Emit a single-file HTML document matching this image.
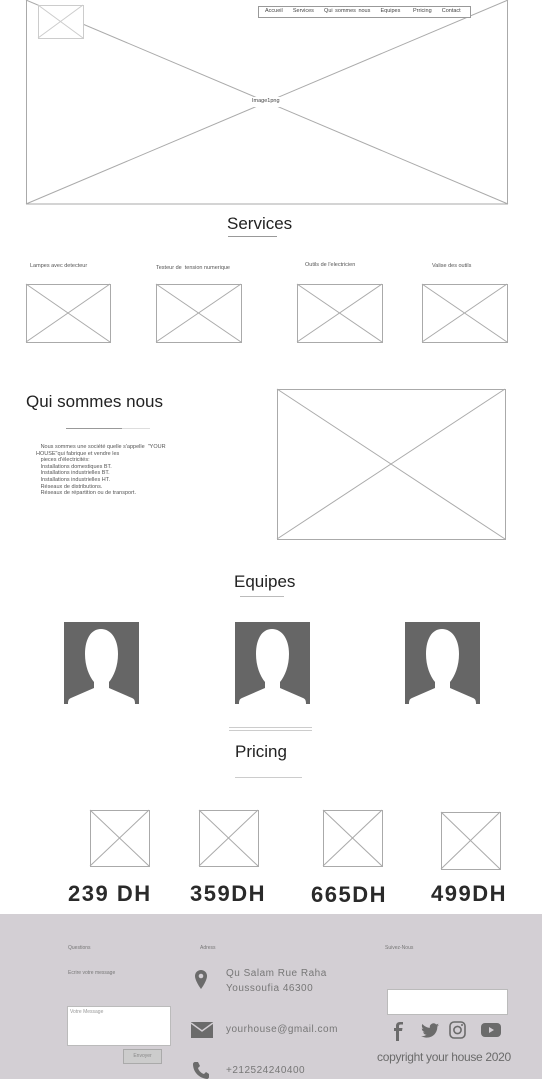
<!DOCTYPE html>
<html><head><meta charset="utf-8"><style>
*{margin:0;padding:0;box-sizing:border-box}
body{width:542px;height:1079px;position:relative;background:#fff;font-family:"Liberation Sans",sans-serif;color:#333;overflow:hidden}
.a{position:absolute;white-space:nowrap}
svg.ph{position:absolute}
.t{font-size:5.5px;color:#555}
.h{font-size:17px;color:#222}
.pr{font-size:22px;font-weight:bold;color:#2a2a2a;letter-spacing:1.5px}
.f{font-size:5px;color:#777}
.ad{font-size:10px;color:#777;letter-spacing:0.5px}
</style></head><body>
<svg class="ph" style="left:0;top:0" width="542" height="914">
<g fill="none" stroke="#aaa" stroke-width="1">
<rect x="26.5" y="-1" width="481" height="205"/>
<line x1="26" y1="0" x2="508" y2="204"/><line x1="508" y1="0" x2="26" y2="204"/>
<rect x="38.5" y="5.5" width="45" height="33" fill="#fff" stroke="#ccc"/>
<line x1="38" y1="5" x2="83" y2="38" stroke="#ccc"/><line x1="83" y1="5" x2="38" y2="38" stroke="#ccc"/>
<rect x="258.5" y="6.5" width="212" height="11" fill="#fff" stroke="#999"/>
<rect x="250" y="97" width="34" height="10" fill="#fff" stroke="none"/>
<line x1="228" y1="236.5" x2="277" y2="236.5" stroke="#999"/>
<rect x="26.5" y="284.5" width="84" height="58"/><line x1="26" y1="284" x2="110" y2="342"/><line x1="110" y1="284" x2="26" y2="342"/>
<rect x="156.5" y="284.5" width="85" height="58"/><line x1="156" y1="284" x2="241" y2="342"/><line x1="241" y1="284" x2="156" y2="342"/>
<rect x="297.5" y="284.5" width="85" height="58"/><line x1="297" y1="284" x2="382" y2="342"/><line x1="382" y1="284" x2="297" y2="342"/>
<rect x="422.5" y="284.5" width="85" height="58"/><line x1="422" y1="284" x2="507" y2="342"/><line x1="507" y1="284" x2="422" y2="342"/>
<line x1="66" y1="428.5" x2="150" y2="428.5" stroke="#ddd"/><line x1="66" y1="428.5" x2="122" y2="428.5" stroke="#999"/>
<rect x="277.5" y="389.5" width="228" height="150"/><line x1="277" y1="389" x2="505" y2="539"/><line x1="505" y1="389" x2="277" y2="539"/>
<line x1="240" y1="596.5" x2="284" y2="596.5" stroke="#bbb"/>
<line x1="229" y1="727.5" x2="312" y2="727.5" stroke="#ccc"/><line x1="229" y1="730.5" x2="312" y2="730.5" stroke="#ccc"/>
<line x1="235" y1="777.5" x2="302" y2="777.5" stroke="#ccc"/>
<rect x="90.5" y="810.5" width="59" height="56"/><line x1="90" y1="810" x2="149" y2="866"/><line x1="149" y1="810" x2="90" y2="866"/>
<rect x="199.5" y="810.5" width="59" height="56"/><line x1="199" y1="810" x2="258" y2="866"/><line x1="258" y1="810" x2="199" y2="866"/>
<rect x="323.5" y="810.5" width="59" height="56"/><line x1="323" y1="810" x2="382" y2="866"/><line x1="382" y1="810" x2="323" y2="866"/>
<rect x="441.5" y="812.5" width="59" height="57"/><line x1="441" y1="812" x2="500" y2="869"/><line x1="500" y1="812" x2="441" y2="869"/>
</g>
<g>
<defs><g id="av"><rect width="75" height="82" fill="#666"/><path d="M37 7c-10 0-16 10-16 25 0 12 4 22 9 28v6L7 76c-3 1-3 4-3 6h67c0-2 0-5-3-6L45 66v-6c5-6 9-16 9-28C54 17 47 7 37 7z" fill="#fff"/></g></defs>
<use href="#av" x="64" y="622"/><use href="#av" x="235" y="622"/><use href="#av" x="405" y="622"/>
</g>
</svg>
<div class="a" style="left:265px;top:8px;font-size:5.5px;color:#444;word-spacing:1px">Accueil&nbsp;&nbsp;&nbsp; Services&nbsp;&nbsp;&nbsp; Qui sommes nous&nbsp;&nbsp;&nbsp; Equipes&nbsp;&nbsp;&nbsp;&nbsp; Prricing&nbsp;&nbsp;&nbsp; Contact</div>
<div class="a" style="left:252px;top:98px;font-size:5.5px;color:#444">Image1png</div>
<div class="a h" style="left:227px;top:214px">Services</div>
<div class="a t" style="left:30px;top:263px">Lampes avec detecteur</div>
<div class="a t" style="left:156px;top:265px">Testeur de&nbsp; tension numerique</div>
<div class="a t" style="left:305px;top:262px">Outils de l'electricien</div>
<div class="a t" style="left:432px;top:263px">Valise des outils</div>
<div class="a h" style="left:26px;top:392px">Qui sommes nous</div>
<div class="a t" style="left:36px;top:444px;line-height:6.6px;font-size:5.5px">&nbsp;&nbsp;&nbsp;Nous sommes une société quelle s'appelle&nbsp; "YOUR<br>HOUSE"qui fabrique et vendre les<br>&nbsp;&nbsp;&nbsp;pieces d'électricités:<br>&nbsp;&nbsp;&nbsp;Installations domestiques BT.<br>&nbsp;&nbsp;&nbsp;Installations industrielles BT.<br>&nbsp;&nbsp;&nbsp;Installations industrielles HT.<br>&nbsp;&nbsp;&nbsp;Réseaux de distributions.<br>&nbsp;&nbsp;&nbsp;Réseaux de répartition ou de transport.</div>
<div class="a h" style="left:234px;top:572px">Equipes</div>
<div class="a h" style="left:235px;top:742px">Pricing</div>
<div class="a pr" style="left:68px;top:881px">239 DH</div>
<div class="a pr" style="left:190px;top:881px">359DH</div>
<div class="a pr" style="left:311px;top:882px">665DH</div>
<div class="a pr" style="left:431px;top:881px">499DH</div>
<div class="a" style="left:0;top:914px;width:542px;height:165px;background:#d3cfd4"></div>
<div class="a f" style="left:68px;top:945px">Questions</div>
<div class="a f" style="left:68px;top:970px">Ecrire votre message</div>
<div class="a" style="left:67px;top:1006px;width:104px;height:40px;background:#fff;border:1px solid #bbb;font-size:5px;color:#999;padding:2px">Votre Message</div>
<div class="a" style="left:123px;top:1049px;width:39px;height:15px;background:#ccc;border:1px solid #aaa;font-size:5px;color:#888;text-align:center;line-height:13px">Envoyer</div>
<div class="a f" style="left:200px;top:945px">Adress</div>
<svg class="ph" style="left:194px;top:969px" width="14" height="22" viewBox="0 0 14 22"><path d="M7 1a6 6 0 0 0-6 6c0 5 6 13 6 13s6-8 6-13a6 6 0 0 0-6-6z" fill="#6b6b6b"/><circle cx="7" cy="7" r="2.3" fill="#d3cfd4"/></svg>
<div class="a ad" style="left:226px;top:966px;line-height:15px">Qu Salam Rue Raha<br>Youssoufia 46300</div>
<svg class="ph" style="left:191px;top:1022px" width="22" height="16" viewBox="0 0 22 16"><rect width="22" height="16" fill="#6b6b6b"/><path d="M0 1l11 8 11-8" fill="none" stroke="#d3cfd4" stroke-width="1.5"/></svg>
<div class="a ad" style="left:226px;top:1024px">yourhouse@gmail.com</div>
<svg class="ph" style="left:192px;top:1061px" width="17" height="18" viewBox="0 0 17 18"><path d="M3 1l3 0 2 4-2 2c1 3 3 5 6 6l2-2 3 2v3c0 1-1 2-2 2C7 17 1 11 1 3c0-1 1-2 2-2z" fill="#6b6b6b"/></svg>
<div class="a ad" style="left:226px;top:1065px">+212524240400</div>
<div class="a f" style="left:385px;top:945px">Suivez-Nous</div>
<div class="a" style="left:387px;top:989px;width:121px;height:26px;background:#fff;border:1px solid #bbb"></div>
<svg class="ph" style="left:388px;top:1020px" width="116" height="22" viewBox="0 0 116 22">
<path d="M11 21V11h3l.5-3H11V6c0-1 .5-1.5 1.5-1.5H15V2h-3c-3 0-4 2-4 4v2H6v3h2v10z" fill="#6b6b6b"/>
<path d="M51 5c-.7.3-1.4.5-2.1.6.8-.5 1.3-1.2 1.6-2-.7.4-1.5.7-2.3.9a3.7 3.7 0 0 0-6.3 3.3c-3-.1-5.700-1.600-7.500-3.800-1 1.700-.5 3.800 1.100 4.900-.6 0-1.200-.2-1.700-.5 0 1.800 1.300 3.300 3 3.700-.5.2-1.100.2-1.700.1.5 1.500 1.900 2.500 3.500 2.600A7.4 7.4 0 0 1 33 16c1.600 1 3.600 1.600 5.700 1.600 7 0 10.800-5.800 10.600-11C50 6 50.600 5.600 51 5z" fill="#6b6b6b"/>
<rect x="62" y="2" width="15" height="16" rx="4" fill="none" stroke="#6b6b6b" stroke-width="1.6"/><circle cx="69.5" cy="10" r="3.6" fill="none" stroke="#6b6b6b" stroke-width="1.6"/><circle cx="74" cy="5" r="1" fill="#6b6b6b"/>
<rect x="93" y="3" width="20" height="14" rx="4" fill="#6b6b6b"/><path d="M101 7l5 3-5 3z" fill="#d3cfd4"/>
</svg>
<div class="a" style="left:377px;top:1050px;font-size:12px;color:#6b6b6b;letter-spacing:-0.3px">copyright your house 2020</div>
</body></html>
